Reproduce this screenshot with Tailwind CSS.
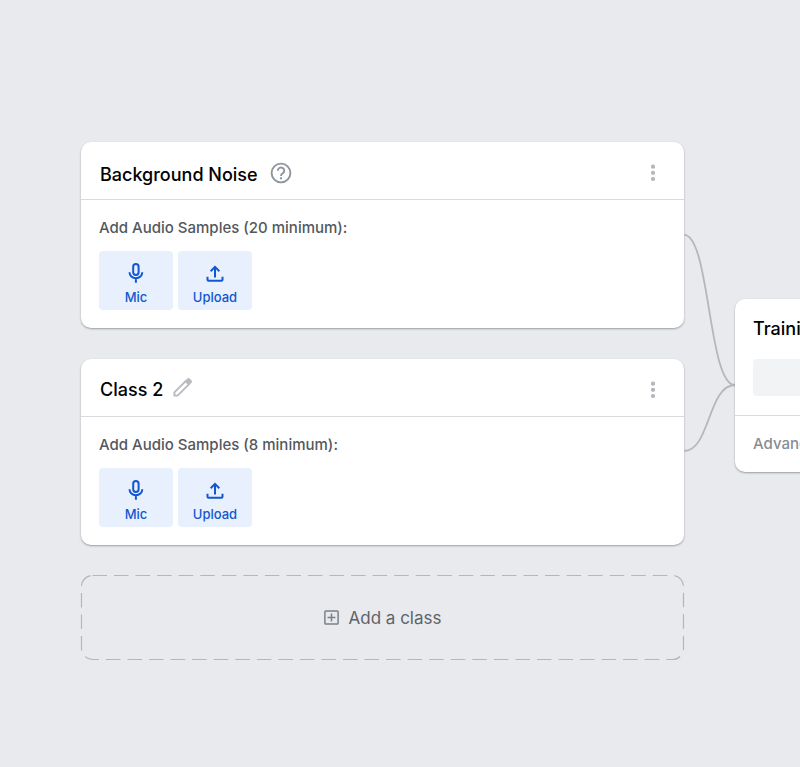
<!DOCTYPE html>
<html lang="en">
<head>
  <meta charset="UTF-8" />
  <meta name="viewport" content="width=device-width, initial-scale=1.0" />
  <title>Audio Project</title>
  <script src="https://cdn.jsdelivr.net/npm/@tailwindcss/browser@4"></script>
</head>
<body class="bg-[#e8eaed] font-['Inter',sans-serif]">

  <!-- shared icons -->
  <svg class="hidden">
    <symbol id="mic" viewBox="0 0 16 20">
      <rect x="5.2" y="1" width="5.4" height="11" rx="2.7" fill="none" stroke="currentColor" stroke-width="2" />
      <path d="M1.5 9.3a6.4 6 0 0 0 12.8 0M7.9 15.3v4.4" fill="none" stroke="currentColor" stroke-width="2" />
    </symbol>
    <symbol id="upload" viewBox="0 0 18 18">
      <path d="M9 12.5V2.3M4.7 6.2L9 1.9l4.3 4.3M1.5 11.8v3a1 1 0 0 0 1 1h13a1 1 0 0 0 1-1v-3" fill="none" stroke="currentColor" stroke-width="2" />
    </symbol>
    <symbol id="dots" viewBox="0 0 4 18">
      <circle cx="2" cy="2.6" r="2.1" /><circle cx="2" cy="8.8" r="2.1" /><circle cx="2" cy="15" r="2.1" />
    </symbol>
  </svg>

  <main class="flex min-h-screen items-start overflow-hidden pt-[142px] pl-[81px]">

    <div class="min-w-0 flex-1">
      <section class="mb-[31px] rounded-[10px] bg-white shadow-[0_1px_2px_rgba(60,64,67,0.45)]">
        <div class="flex h-[58px] items-center border-b border-[#d8dade] pt-1 pr-[29px] pl-[19px]">
          <h2 class="pt-1 text-[18px] leading-6 font-medium text-black">Background Noise</h2>
          <button aria-label="Help" class="ml-3 text-[#8f959c]">
            <svg class="block size-[22px]" viewBox="0 0 22 22" fill="none" stroke="currentColor" stroke-width="1.9">
              <circle cx="11" cy="11" r="9.4" />
              <path d="M7.8 8.7a3.2 3.1 0 1 1 5 2.5c-1.2.9-1.8 1.3-1.8 2.7" />
              <path d="M11 15.2v2" stroke-width="2" />
            </svg>
          </button>
          <button aria-label="More options" class="ml-auto text-[#b5b8bd]"><svg class="block h-[18px] w-1 overflow-visible" fill="currentColor"><use href="#dots" /></svg></button>
        </div>
        <div class="p-[18px]">
          <p class="text-[15px] leading-5 font-medium text-[#54585d]">Add Audio Samples (20 minimum):</p>
          <div class="mt-[13px] flex gap-[5px]">
            <button class="flex h-[59px] w-[74px] flex-col items-center rounded bg-[#e8f0fe] pt-3 text-[#1257cf]">
              <svg class="h-5 w-4"><use href="#mic" /></svg>
              <span class="mt-[6px] text-[13px] leading-4 font-medium">Mic</span>
            </button>
            <button class="flex h-[59px] w-[74px] flex-col items-center rounded bg-[#e8f0fe] pt-3 text-[#1257cf]">
              <svg class="mt-[2px] size-[18px]"><use href="#upload" /></svg>
              <span class="mt-[6px] text-[13px] leading-4 font-medium">Upload</span>
            </button>
          </div>
        </div>
      </section>

      <section class="mb-[30px] rounded-[10px] bg-white shadow-[0_1px_2px_rgba(60,64,67,0.45)]">
        <div class="flex h-[58px] items-center border-b border-[#d8dade] pt-1 pr-[29px] pl-[19px]">
          <h2 class="text-[18px] leading-6 font-medium text-black">Class 2</h2>
          <button aria-label="Rename class" class="ml-[10px] pb-1 text-[#b9bbc0]">
            <svg class="block size-5" viewBox="0 0 20 20">
              <path d="M1.4 14.4L12.7 3.1l3.2 3.2L4.6 17.6H1.4z" fill="none" stroke="currentColor" stroke-width="1.9" />
              <path d="M11.7 3.2l2.5-2.5a2 2 0 0 1 2.7 0l1.5 1.5a2 2 0 0 1 0 2.7l-2.5 2.5z" fill="currentColor" />
            </svg>
          </button>
          <button aria-label="More options" class="ml-auto text-[#b5b8bd]"><svg class="block h-[18px] w-1 overflow-visible" fill="currentColor"><use href="#dots" /></svg></button>
        </div>
        <div class="p-[18px]">
          <p class="text-[15px] leading-5 font-medium text-[#54585d]">Add Audio Samples (8 minimum):</p>
          <div class="mt-[13px] flex gap-[5px]">
            <button class="flex h-[59px] w-[74px] flex-col items-center rounded bg-[#e8f0fe] pt-3 text-[#1257cf]">
              <svg class="h-5 w-4"><use href="#mic" /></svg>
              <span class="mt-[6px] text-[13px] leading-4 font-medium">Mic</span>
            </button>
            <button class="flex h-[59px] w-[74px] flex-col items-center rounded bg-[#e8f0fe] pt-3 text-[#1257cf]">
              <svg class="mt-[2px] size-[18px]"><use href="#upload" /></svg>
              <span class="mt-[6px] text-[13px] leading-4 font-medium">Upload</span>
            </button>
          </div>
        </div>
      </section>

      <button class="relative flex h-[85px] w-full items-center justify-center gap-[10px] text-[#5f6368]">
        <svg class="absolute inset-0 size-full overflow-visible" fill="none" stroke="#b3b6ba" stroke-width="1.2">
          <rect class="h-[calc(100%-1px)] w-[calc(100%-1px)]" x="0.5" y="0.5" rx="11" stroke-dasharray="14.5 7.05" />
        </svg>
        <svg class="size-[15px]" viewBox="0 0 15 15" fill="none" stroke="#7b8187" stroke-width="1.5">
          <rect x="0.9" y="0.9" width="13.2" height="13.2" rx="0.8" />
          <path d="M7.5 3.6v7.8M3.6 7.5h7.8" />
        </svg>
        <span class="text-[17px] leading-6">Add a class</span>
      </button>
    </div>

    <!-- lines joining the classes to training -->
    <svg class="mt-[92px] h-[219px] w-[51px] shrink-0" viewBox="0 0 51 219" fill="none" stroke="#b5b7bb" stroke-width="1.8">
      <path d="M0 0.9C26 0.9 24 151 51 151" />
      <path d="M0 217C26 217 24 151 51 151" />
    </svg>

    <div class="mt-[157px] w-[65px] shrink-0">
      <section class="w-[240px] rounded-[10px] bg-white shadow-[0_1px_2px_rgba(60,64,67,0.45)]">
        <div class="border-b border-[#d8dade] px-[18px] pt-[18px] pb-[19px]">
          <h2 class="text-[18px] leading-6 font-medium text-black">Training</h2>
          <button aria-label="Train model" disabled class="mt-[18px] block h-[37px] w-full rounded bg-[#f1f3f4]"></button>
        </div>
        <button class="block h-14 w-full px-[18px] text-left text-[15px] leading-5 font-medium text-[#868d94]">Advanced</button>
      </section>
    </div>

  </main>

</body>
</html>
